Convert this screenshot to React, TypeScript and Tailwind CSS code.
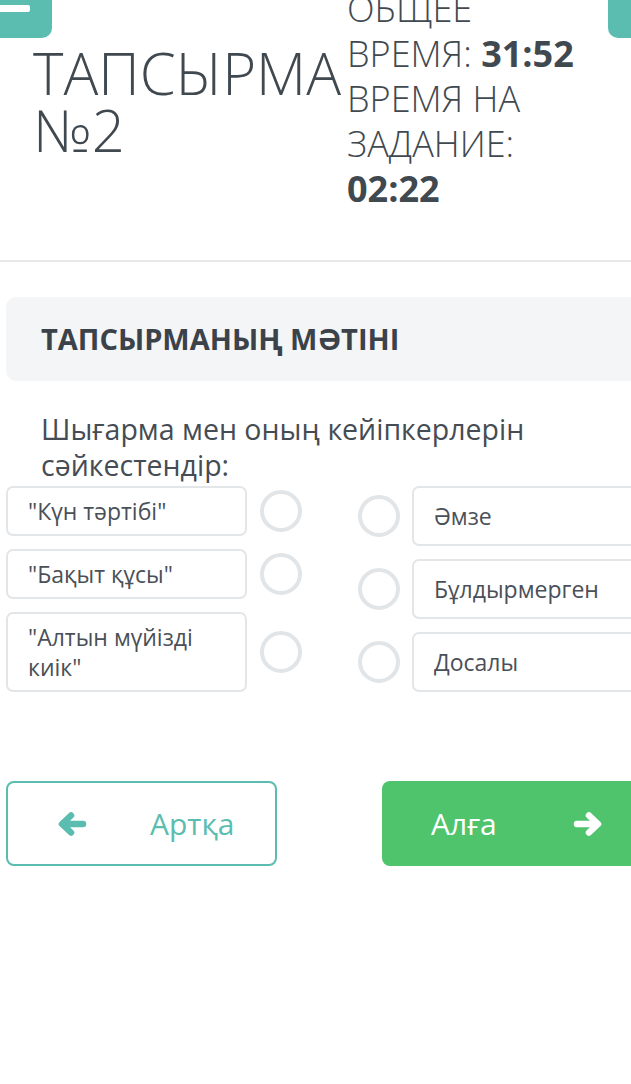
import React from "react";

const leftItems = [
  { id: 1, text: '"Күн тәртібі"' },
  { id: 2, text: '"Бақыт құсы"' },
  { id: 3, text: '"Алтын мүйізді киік"' },
];

const rightItems = [
  { id: 1, text: "Әмзе" },
  { id: 2, text: "Бұлдырмерген" },
  { id: 3, text: "Досалы" },
];

const Circle = () => (
  <div className="w-[42px] h-[42px] shrink-0 rounded-full border-[4px] border-[#e1e5e8] bg-white" />
);

// chunky rounded arrow, like the old font-awesome one
const Arrow = ({ dir }: { dir: "left" | "right" }) => (
  <svg
    width="30"
    height="26"
    viewBox="0 0 30 26"
    fill="none"
    stroke="currentColor"
    strokeWidth="6.5"
    strokeLinecap="round"
    strokeLinejoin="round"
    className={dir === "right" ? "-scale-x-100" : ""}
  >
    <path d="M26 13H6M14 4.5L5 13l9 8.5" />
  </svg>
);

const App: React.FC = () => {
  return (
    <div
      className="relative w-[631px] h-[1084px] overflow-hidden bg-white text-[#3e454c]"
      style={{ fontFamily: '"Open Sans", "Noto Sans", sans-serif' }}
    >
      {/* top menu buttons, scrolled half out of view */}
      <div className="absolute left-0 top-0 w-[52px] h-[38px] bg-[#5bbdb0] rounded-br-[10px] z-10">
        <div className="mt-[5px] w-[30px] h-[7px] bg-white rounded-r-[2px]" />
      </div>
      <div className="absolute left-[608px] top-0 w-[40px] h-[38px] bg-[#5bbdb0] rounded-bl-[10px] z-10" />

      <div className="w-[680px]">
        {/* header */}
        <div className="flex -mt-[14px] pl-[33px]">
          <h1 className="w-[314px] mt-[58px] text-[58px] leading-[57px] font-light text-[#414950]">
            ТАПСЫРМА №2
          </h1>
          <div className="w-[250px] text-[36px] leading-[45px] font-light text-[#414950]">
            <p>
              ОБЩЕЕ ВРЕМЯ: <span className="font-bold">31:52</span>
            </p>
            <p>
              ВРЕМЯ НА ЗАДАНИЕ: <span className="font-bold">02:22</span>
            </p>
          </div>
        </div>

        <div className="mt-[49px] h-[2px] bg-[#e7e9eb]" />

        {/* task text */}
        <div className="ml-[6px] mt-[35px] h-[84px] rounded-[10px] bg-[#f3f5f7] flex items-center pl-[35px]">
          <p className="text-[29px] font-bold text-[#3b4249]">ТАПСЫРМАНЫҢ МӘТІНІ</p>
        </div>

        <p className="mt-[30px] pl-[41px] w-[560px] text-[28.5px] leading-[36px] text-[#454c53]">
          Шығарма мен оның кейіпкерлерін сәйкестендір:
        </p>

        {/* matching */}
        <div className="mt-[3px] flex pl-[6px] gap-[56px] text-[23px] leading-[30px] text-[#4a5057]">
          <div className="flex flex-col gap-[13px]">
            {leftItems.map((item) => (
              <div key={item.id} className="flex items-center gap-[13px]">
                <div className="w-[241px] border-2 border-[#e3e6e9] rounded-[7px] px-[20px] py-[8px]">
                  {item.text}
                </div>
                <Circle />
              </div>
            ))}
          </div>
          <div className="flex flex-col gap-[13px]">
            {rightItems.map((item) => (
              <div key={item.id} className="flex items-center gap-[12px]">
                <Circle />
                <div className="w-[250px] border-2 border-[#e3e6e9] rounded-[7px] px-[20px] py-[13px]">
                  {item.text}
                </div>
              </div>
            ))}
          </div>
        </div>

        {/* navigation */}
        <div className="mt-[89px] pl-[6px] flex gap-[105px] text-[30px]">
          <button className="w-[271px] h-[85px] border-2 border-[#5bbdb0] rounded-[8px] flex items-center pl-[49px] text-[#5bbdb0]">
            <Arrow dir="left" />
            <span className="ml-[63px]">Артқа</span>
          </button>
          <button className="w-[271px] h-[85px] bg-[#50c46c] rounded-[8px] flex items-center pl-[49px] text-white">
            <span>Алға</span>
            <span className="ml-[76px] flex">
              <Arrow dir="right" />
            </span>
          </button>
        </div>
      </div>
    </div>
  );
};

export default App;
